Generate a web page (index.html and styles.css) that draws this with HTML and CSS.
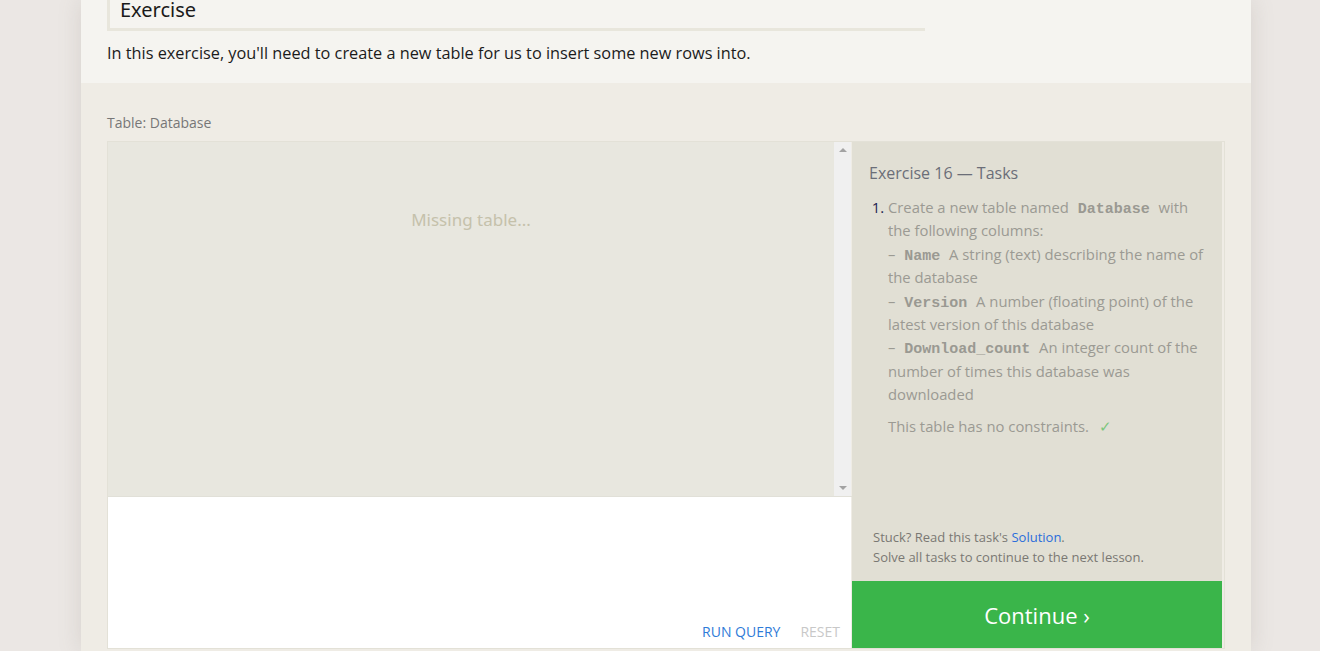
FILE: index.html
```html
<!DOCTYPE html>
<html>
<head>
<meta charset="utf-8">
<link rel="stylesheet" href="styles.css">
</head>
<body>
<div class="page">
  <section class="intro">
    <h2 class="title-box">Exercise</h2>
    <p class="lead">In this exercise, you'll need to create a new table for us to insert some new rows into.</p>
  </section>
  <section class="exercise">
    <div class="table-label">Table: Database</div>
    <div class="workspace">
      <div class="left-col">
        <div class="results">
          <div class="results-body">Missing table...</div>
          <div class="scrollbar">
            <span class="arrow arrow-up"></span>
            <span class="arrow arrow-down"></span>
          </div>
        </div>
        <div class="editor">
          <div class="editor-actions">
            <span class="run">RUN QUERY</span>
            <span class="reset">RESET</span>
          </div>
        </div>
      </div>
      <div class="right-col">
        <div class="tasks">
          <div class="tasks-title">Exercise 16 — Tasks</div>
          <ol class="task-list">
            <li>Create a new table named <code>Database</code> with the following columns:<br>– <code>Name</code> A string (text) describing the name of the database<br>– <code>Version</code> A number (floating point) of the latest version of this database<br>– <code>Download_count</code> An integer count of the number of times this database was downloaded
              <div class="note">This table has no constraints. <span class="check">✓</span></div>
            </li>
          </ol>
          <div class="hint">
            <div>Stuck? Read this task's <a class="solution">Solution</a>.</div>
            <div>Solve all tasks to continue to the next lesson.</div>
          </div>
        </div>
        <div class="continue">Continue ›</div>
      </div>
    </div>
  </section>
</div>
</body>
</html>
```

FILE: styles.css
```css
html, body {
  margin: 0;
  padding: 0;
  height: 100%;
  overflow: hidden;
}
body {
  background: #ebe7e4;
  font-family: "Open Sans", "Noto Sans", sans-serif;
}
.page {
  width: 1170px;
  margin-left: 81px;
  box-shadow: 0 0 22px rgba(120, 110, 100, 0.18);
  height: 651px;
}
.intro {
  background: #f5f4f0;
  height: 83px;
  padding: 0 26px;
  box-sizing: border-box;
  overflow: hidden;
}
.title-box {
  margin: -9px 0 0 0;
  width: 805px;
  border-left: 3px solid #e8e6dc;
  border-bottom: 3px solid #e8e6dc;
  padding: 0 0 0 10px;
  font-size: 20px;
  font-weight: normal;
  line-height: 37px;
  color: #1a1a1a;
  font-family: "Noto Sans", sans-serif;
}
.lead {
  margin: 11px 0 0 0;
  font-size: 16.3px;
  line-height: 22px;
  color: #1b1b1b;
}
.exercise {
  background: #efece5;
  padding: 30px 26px 0 26px;
  height: 568px;
  box-sizing: border-box;
}
.table-label {
  font-size: 14px;
  line-height: 20px;
  color: #777;
  margin-bottom: 8px;
}
.workspace {
  display: flex;
  border: 1px solid #e3e1d7;
  height: 508px;
  box-sizing: border-box;
}
.left-col {
  width: 744px;
  display: flex;
  flex-direction: column;
}
.results {
  height: 354px;
  display: flex;
  border-bottom: 1px solid #e1e0d8;
}
.results-body {
  flex: 1;
  background: #e8e7df;
  text-align: center;
  color: #c5c1ab;
  font-size: 17px;
  padding-top: 66px;
  box-sizing: border-box;
  font-family: "Noto Sans", sans-serif;
}
.scrollbar {
  width: 17px;
  background: #f0f0f0;
  display: flex;
  flex-direction: column;
  justify-content: space-between;
  align-items: center;
  padding: 6px 0;
  box-sizing: border-box;
  margin-right: 1px;
}
.arrow {
  width: 0;
  height: 0;
  border-left: 4px solid transparent;
  border-right: 4px solid transparent;
}
.arrow-up { border-bottom: 4px solid #a3a3a3; }
.arrow-down { border-top: 4px solid #a3a3a3; }
.editor {
  flex: 1;
  background: #fff;
  display: flex;
  flex-direction: column;
  justify-content: flex-end;
  margin-right: 1px;
}
.editor-actions {
  display: flex;
  justify-content: flex-end;
  gap: 19px;
  padding: 0 11px 6px 0;
  font-size: 14px;
  line-height: 20px;
}
.run { color: #2f7bd8; margin-right: 1px; }
.reset { color: #c8c8c8; }
.right-col {
  width: 370px;
  display: flex;
  flex-direction: column;
}
.tasks {
  flex: 1;
  background: #e1dfd4;
  padding: 20px 17px 14px 17px;
  display: flex;
  flex-direction: column;
}
.tasks-title {
  font-size: 16px;
  line-height: 22px;
  color: #6b6e78;
  margin-bottom: 12px;
}
.task-list {
  margin: 0;
  padding-left: 19px;
  font-size: 14.8px;
  line-height: 23.4px;
  color: #9b9a93;
  flex: 1;
}
.task-list li::marker {
  color: #1c2150;
}
.task-list code {
  font-family: "Liberation Mono", monospace;
  font-weight: bold;
  font-size: 15px;
  line-height: 1;
  color: #9a9992;
  padding: 0 5px;
}
.note {
  margin-top: 8px;
}
.check {
  color: #7cc67e;
  margin-left: 6px;
}
.hint {
  font-size: 13px;
  line-height: 20px;
  color: #7a7873;
  padding-left: 4px;
}
.solution {
  color: #2a6ddb;
}
.continue {
  height: 67px;
  background: #3ab54a;
  color: #fff;
  font-size: 22px;
  display: flex;
  align-items: center;
  justify-content: center;
}
```
